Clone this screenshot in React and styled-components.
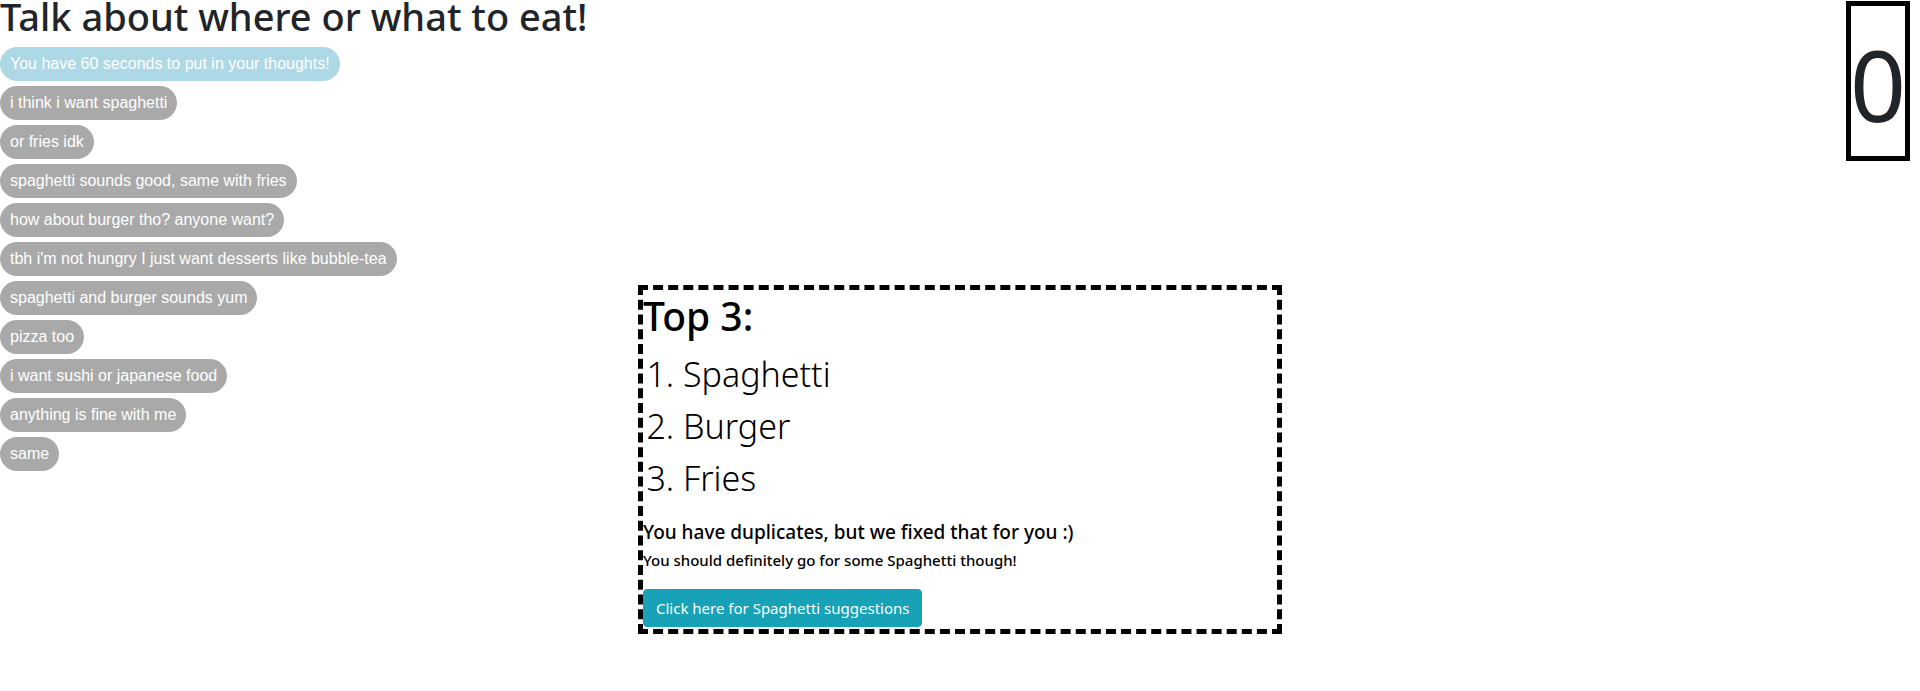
import React from "react";
import styled, { createGlobalStyle } from "styled-components";

const GlobalStyle = createGlobalStyle`
  *, *::before, *::after { box-sizing: border-box; }
  body {
    margin: 0;
    background: #fff;
    color: #212529;
    font-family: "Segoe UI", "Noto Sans", "Open Sans", sans-serif;
    font-size: 16px;
    line-height: 24px;
  }
`;

const Page = styled.main`
  display: grid;
  grid-template-columns: minmax(0, 1fr) minmax(0, 644px) minmax(0, 1fr);
  align-items: start;
`;

const Title = styled.h1`
  margin: 0 0 15px;
  font-size: 38px;
  font-weight: 500;
  line-height: 32px;
  white-space: nowrap;
`;

const Messages = styled.ul`
  display: flex;
  flex-direction: column;
  align-items: flex-start;
  gap: 5px;
  margin: 0;
  padding: 0;
  list-style: none;
`;

const Message = styled.li`
  padding: 5px 10px;
  border-radius: 17px;
  background: ${(p) => (p.$notice ? "lightblue" : "darkgray")};
  color: #fff;
  font-family: "Liberation Sans", Arial, sans-serif;
`;

const Results = styled.section`
  margin-top: 285px;
  padding-top: 2px;
  border: 5px dashed #000;
  color: #000;
`;

const ResultsTitle = styled.h2`
  margin: 0 0 8px;
  font-size: 39px;
  font-weight: 500;
  line-height: 48px;
`;

const Ranking = styled.ol`
  margin: 0 0 16px;
  padding-left: 40px;
  font-size: 34px;
  font-weight: 300;
  line-height: 52px;
`;

const Note = styled.h3`
  margin: 0 0 6px;
  font-size: 19px;
  font-weight: 500;
  line-height: 24px;
`;

const Advice = styled.h4`
  margin: 0 0 19px;
  font-size: 15px;
  font-weight: 500;
  line-height: 20px;
`;

const SuggestButton = styled.button`
  display: block;
  margin-bottom: 2px;
  padding: 6px 12px;
  border: 1px solid #17a2b8;
  border-radius: 4px;
  background: #17a2b8;
  color: #fff;
  font: inherit;
  font-size: 15px;
  line-height: 24px;
  cursor: pointer;
`;

const Timer = styled.div`
  justify-self: end;
  width: 64px;
  margin: 1px 10px 0 0;
  padding-top: 6px;
  border: 5px solid #000;
  display: flex;
  justify-content: center;
  font-size: 98px;
  line-height: 144px;
`;

const messages = [
  "i think i want spaghetti",
  "or fries idk",
  "spaghetti sounds good, same with fries",
  "how about burger tho? anyone want?",
  "tbh i'm not hungry I just want desserts like bubble-tea",
  "spaghetti and burger sounds yum",
  "pizza too",
  "i want sushi or japanese food",
  "anything is fine with me",
  "same",
];

const topPicks = ["Spaghetti", "Burger", "Fries"];

export default function App() {
  return (
    <>
      <GlobalStyle />
      <Page>
        <section>
          <Title>Talk about where or what to eat!</Title>
          <Messages>
            <Message $notice>You have 60 seconds to put in your thoughts!</Message>
            {messages.map((text) => (
              <Message key={text}>{text}</Message>
            ))}
          </Messages>
        </section>
        <Results>
          <ResultsTitle>Top 3:</ResultsTitle>
          <Ranking>
            {topPicks.map((pick) => (
              <li key={pick}>{pick}</li>
            ))}
          </Ranking>
          <Note>You have duplicates, but we fixed that for you :)</Note>
          <Advice>You should definitely go for some Spaghetti though!</Advice>
          <SuggestButton type="button">Click here for Spaghetti suggestions</SuggestButton>
        </Results>
        <Timer role="timer">0</Timer>
      </Page>
    </>
  );
}
